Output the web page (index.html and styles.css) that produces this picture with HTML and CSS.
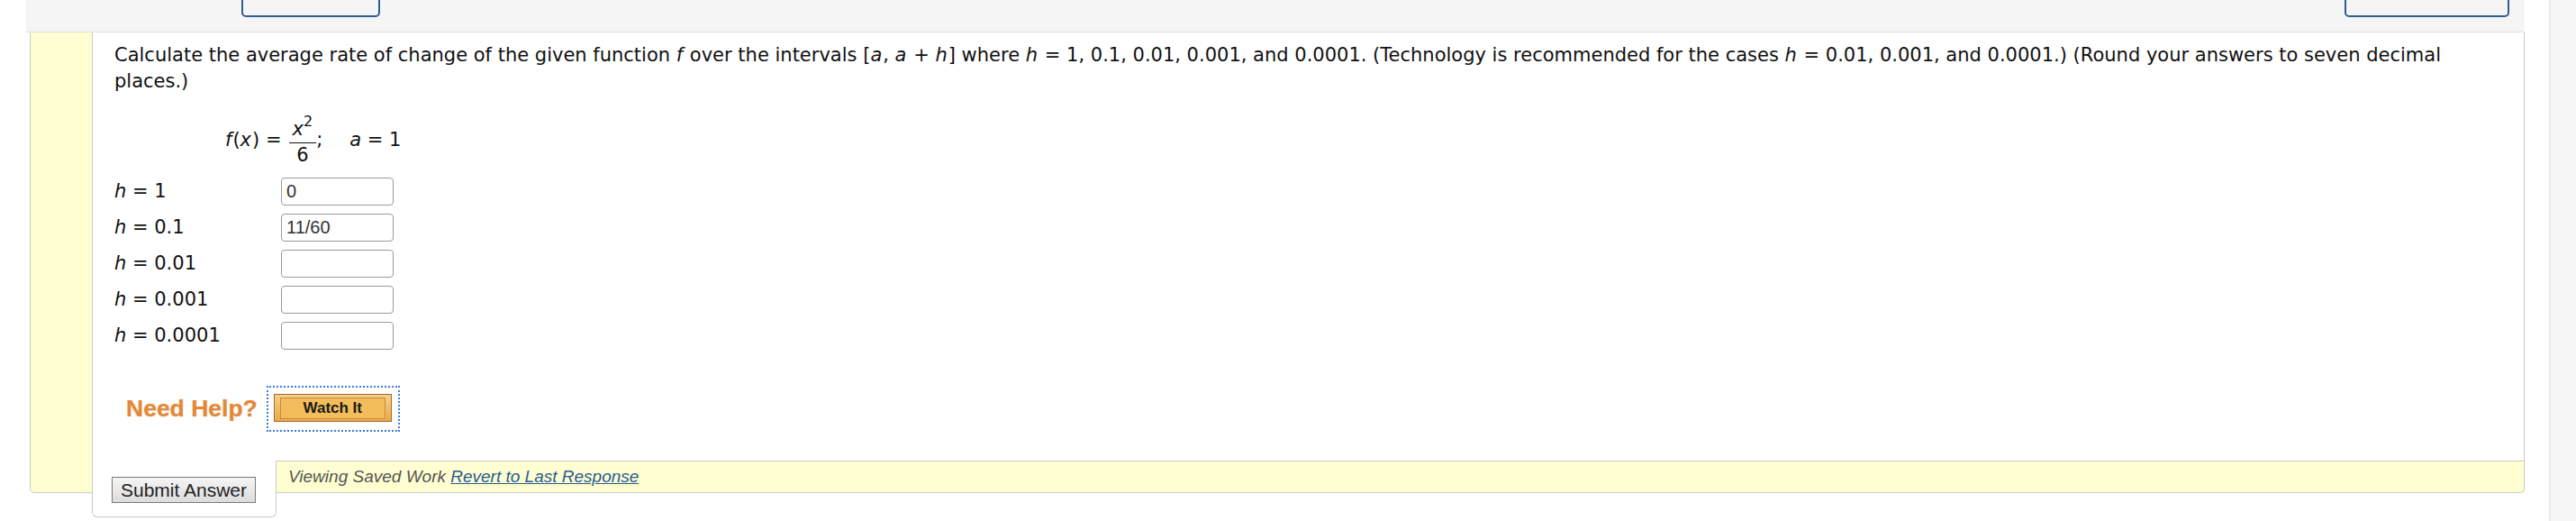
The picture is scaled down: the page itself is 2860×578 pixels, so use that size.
FILE: index.html
```html
<!DOCTYPE html>
<html lang="en">
<head>
<meta charset="utf-8">
<title>Average rate of change</title>
<link rel="stylesheet" href="styles.css">
</head>
<body>
<div class="main">
  <div class="band">
    <div class="band-btn band-btn-left"></div>
    <div class="band-btn band-btn-right"></div>
  </div>
  <div class="panel">
    <div class="stripe"></div>
    <div class="content">
      <div class="question">
        <p class="prompt"><span class="line">Calculate the average rate of change of the given function <i>f</i> over the intervals [<i>a</i>, <i>a</i> + <i>h</i>] where <i>h</i> = 1, 0.1, 0.01, 0.001, and 0.0001. (Technology is recommended for the cases <i>h</i> = 0.01, 0.001, and 0.0001.) (Round your answers to seven decimal</span><br><span class="line">places.)</span></p>
        <div class="formula">
          <span class="fx"><i>f</i>(<i>x</i>) =</span>
          <span class="frac">
            <span class="num"><i>x</i><sup>2</sup></span>
            <span class="den">6</span>
          </span>
          <span class="semi">;</span>
          <span class="aval"><i>a</i> = 1</span>
        </div>
        <div class="rows">
          <div class="row"><span class="lbl"><i>h</i> = 1</span><span class="inp">0</span></div>
          <div class="row"><span class="lbl"><i>h</i> = 0.1</span><span class="inp">11/60</span></div>
          <div class="row"><span class="lbl"><i>h</i> = 0.01</span><span class="inp"></span></div>
          <div class="row"><span class="lbl"><i>h</i> = 0.001</span><span class="inp"></span></div>
          <div class="row"><span class="lbl"><i>h</i> = 0.0001</span><span class="inp"></span></div>
        </div>
        <div class="help">
          <span class="need">Need Help?</span>
          <span class="focus"><span class="watch"><span class="watch-in">Watch It</span></span></span>
        </div>
      </div>
      <div class="footer">
        <div class="submit-cell"><button class="submit" type="button">Submit Answer</button></div>
        <div class="saved">Viewing Saved Work <a href="#" class="revert">Revert to Last Response</a></div>
      </div>
    </div>
  </div>
</div>
<div class="scroll"></div>
</body>
</html>
```

FILE: styles.css
```css
html, body {
  margin: 0;
  padding: 0;
  background: #ffffff;
}
body {
  display: flex;
  height: 578px;
  overflow: hidden;
}
.main {
  flex: none;
  width: 2830px;
  box-sizing: border-box;
  padding: 0 27px 0 29px;
}
.scroll {
  flex: 1;
  background: #f7f7f7;
  border-left: 2px solid #e8e8e8;
}
.band {
  height: 35px;
  background: #f5f5f5;
  border-bottom: 1px solid #dedede;
  display: flex;
  justify-content: space-between;
  align-items: flex-start;
  padding: 0 17px 0 239px;
  overflow: hidden;
}
.band-btn {
  height: 30px;
  margin-top: -11px;
  border: 2px solid #2f5e94;
  border-radius: 5px;
  box-sizing: border-box;
}
.band-btn-left { width: 154px; }
.band-btn-right { width: 183px; }

.panel {
  margin-left: 4px;
  display: flex;
  background: #fefed1;
  border: 1px solid #cccccc;
  border-top: none;
  border-radius: 0 0 5px 5px;
}
.stripe {
  width: 68px;
  flex: none;
}
.content {
  flex: 1;
  display: flex;
  flex-direction: column;
  border-left: 1px solid #cccccc;
}
.question {
  background: #ffffff;
  padding: 11px 24px 32px 24px;
  font-family: "DejaVu Sans", Verdana, sans-serif;
  font-size: 21px;
  color: #111111;
}
.prompt {
  margin: 0;
  line-height: 29px;
  white-space: nowrap;
}
.prompt i {
  padding-right: 1px;
}
.formula {
  margin-top: 27px;
  margin-left: 123px;
  display: flex;
  align-items: center;
}
.fx {
  line-height: 24px;
  padding-bottom: 6px;
}
.fx i {
  padding-right: 1px;
}
.frac {
  display: inline-flex;
  flex-direction: column;
  align-items: center;
  margin-left: 8px;
}
.num {
  line-height: 22px;
  padding: 0 4px 4px 4px;
  border-bottom: 1px solid #111111;
}
.num sup {
  font-size: 16px;
  line-height: 0;
  vertical-align: 10px;
}
.den {
  line-height: 22px;
  padding-top: 2px;
}
.semi {
  line-height: 24px;
  padding-bottom: 6px;
}
.aval {
  line-height: 24px;
  padding-bottom: 6px;
  margin-left: 30px;
}
.rows {
  margin-top: 14px;
  display: flex;
  flex-direction: column;
  gap: 9px;
}
.row {
  display: flex;
  align-items: center;
  height: 31px;
}
.lbl {
  width: 185px;
  flex: none;
  line-height: 31px;
}
.inp {
  width: 125px;
  height: 31px;
  box-sizing: border-box;
  border: 1px solid #9a9a9a;
  border-radius: 4px;
  background: #ffffff;
  padding-left: 5px;
  font-family: "Liberation Sans", Arial, sans-serif;
  font-size: 20px;
  line-height: 29px;
  color: #333333;
}
.help {
  margin-top: 40px;
  display: flex;
  align-items: center;
}
.need {
  margin-left: 13px;
  font-family: "Liberation Sans", Arial, sans-serif;
  font-weight: bold;
  font-size: 26.5px;
  color: #e3893a;
  text-shadow: 0 0 1px rgba(227, 137, 58, 0.6);
}
.focus {
  margin-left: 10px;
  border: 2px dotted #3b7ddd;
  padding: 7px 7px 9px 6px;
  display: flex;
}
.watch {
  width: 131px;
  height: 31px;
  box-sizing: border-box;
  border: 1px solid #a76a2b;
  background: linear-gradient(#f8d18a, #eaa948);
  display: flex;
  padding: 3px 6px 2px 6px;
}
.watch-in {
  flex: 1;
  border: 1px solid #c98a3d;
  background: #f3bd5c;
  font-family: "Liberation Sans", Arial, sans-serif;
  font-weight: bold;
  font-size: 17px;
  color: #1a1a1a;
  text-align: center;
  line-height: 21px;
}
.footer {
  display: flex;
  align-items: flex-start;
}
.submit-cell {
  flex: none;
  width: 205px;
  height: 63px;
  box-sizing: border-box;
  margin-left: -1px;
  margin-bottom: -28px;
  background: #ffffff;
  border: 1px solid #cccccc;
  border-top: none;
  border-radius: 0 0 6px 6px;
  padding: 18px 0 0 21px;
}
.submit {
  width: 160px;
  height: 29px;
  margin: 0;
  padding: 0;
  border: 1px solid #7a7a7a;
  border-radius: 0;
  background: linear-gradient(#f5f5f5, #dcdcdc);
  font-family: "Liberation Sans", Arial, sans-serif;
  font-size: 21px;
  color: #222222;
  line-height: 27px;
}
.saved {
  flex: 1;
  height: 34px;
  border-top: 1px solid #cccccc;
  padding-left: 13px;
  font-family: "Liberation Sans", Arial, sans-serif;
  font-style: italic;
  font-size: 19px;
  line-height: 34px;
  color: #555555;
}
.revert {
  color: #2a5c92;
  text-decoration: underline;
}
```
